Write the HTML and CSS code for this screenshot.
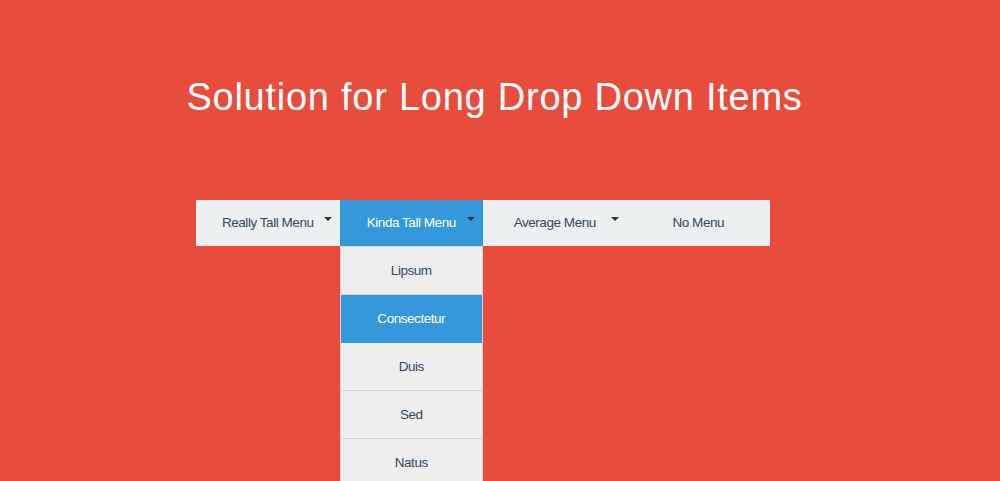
FILE: index.html
```html
<!DOCTYPE html>
<html lang="en">
<head>
    <meta charset="UTF-8">
    <meta name="viewport" content="width=device-width, initial-scale=1.0">
    <title>Solution for Long Drop Down Items</title>

    <!-- Styles -->
    <link rel="stylesheet" href="styles.css">
</head>
<body>

<!-- Header -->
<h1 class="title">Solution for Long Drop Down Items</h1>

<!-- Navigation -->
<nav class="menu">
    <ul class="menu-list">
        <li class="menu-item has-drop">
            <a href="#">Really Tall Menu</a>
            <span class="caret"></span>
        </li>
        <li class="menu-item has-drop is-open">
            <a href="#">Kinda Tall Menu</a>
            <span class="caret"></span>
            <ul class="drop">
                <li class="drop-item"><a href="#">Lipsum</a></li>
                <li class="drop-item is-active"><a href="#">Consectetur</a></li>
                <li class="drop-item"><a href="#">Duis</a></li>
                <li class="drop-item"><a href="#">Sed</a></li>
                <li class="drop-item"><a href="#">Natus</a></li>
            </ul>
        </li>
        <li class="menu-item has-drop">
            <a href="#">Average Menu</a>
            <span class="caret"></span>
        </li>
        <li class="menu-item">
            <a href="#">No Menu</a>
        </li>
    </ul>
</nav>

</body>
</html>
```

FILE: styles.css
```css
/* Global Reset */
*, *::before, *::after {
    margin: 0;
    padding: 0;
    box-sizing: border-box;
}

/* Root Variables */
:root {
    --red: #e74c3c;
    --blue: #3498db;
    --cloud: #ecf0f1;
    --drop-bg: #eeeeee;
    --text-color: #34495e;
    --line-color: #d6d6d6;
}

html {
    overflow: hidden;
}

/* Body Styling */
body {
    font-family: "Liberation Sans", Arial, sans-serif;
    background-color: var(--red);
    color: var(--text-color);
    min-height: 100vh;
}

a {
    color: inherit;
    text-decoration: none;
}

ul {
    list-style: none;
}

/* Header */
.title {
    padding: 77px 11px 0 0;
    font-size: 38px;
    font-weight: 400;
    line-height: 1.1;
    letter-spacing: 0.75px;
    color: #fff;
    text-align: center;
}

/* Navigation */
.menu {
    margin: 81px 0 0 196px;
    width: 574px;
}

.menu-list {
    display: flex;
    background-color: var(--cloud);
}

.menu-item {
    position: relative;
    flex: 1;
    height: 46px;
    font-size: 13.5px;
    line-height: 46px;
    letter-spacing: -0.45px;
    text-align: center;
}

.menu-item > a {
    display: block;
}

.menu-item.is-open {
    background-color: var(--blue);
    color: #fff;
}

/* Caret */
.caret {
    position: absolute;
    top: 17px;
    right: 8px;
    width: 0;
    height: 0;
    border-top: 4px solid #333;
    border-left: 4px solid transparent;
    border-right: 4px solid transparent;
}

/* Drop Down */
.drop {
    position: absolute;
    top: 46px;
    left: 0;
    right: 0;
    background-color: var(--drop-bg);
    border: 1px solid var(--line-color);
    border-bottom: none;
    color: var(--text-color);
}

.drop-item {
    height: 48px;
    line-height: 47px;
    border-bottom: 1px solid var(--line-color);
}

.drop-item a {
    display: block;
}

.drop-item.is-active {
    background-color: var(--blue);
    border-bottom-color: var(--blue);
    color: #fff;
}
```
